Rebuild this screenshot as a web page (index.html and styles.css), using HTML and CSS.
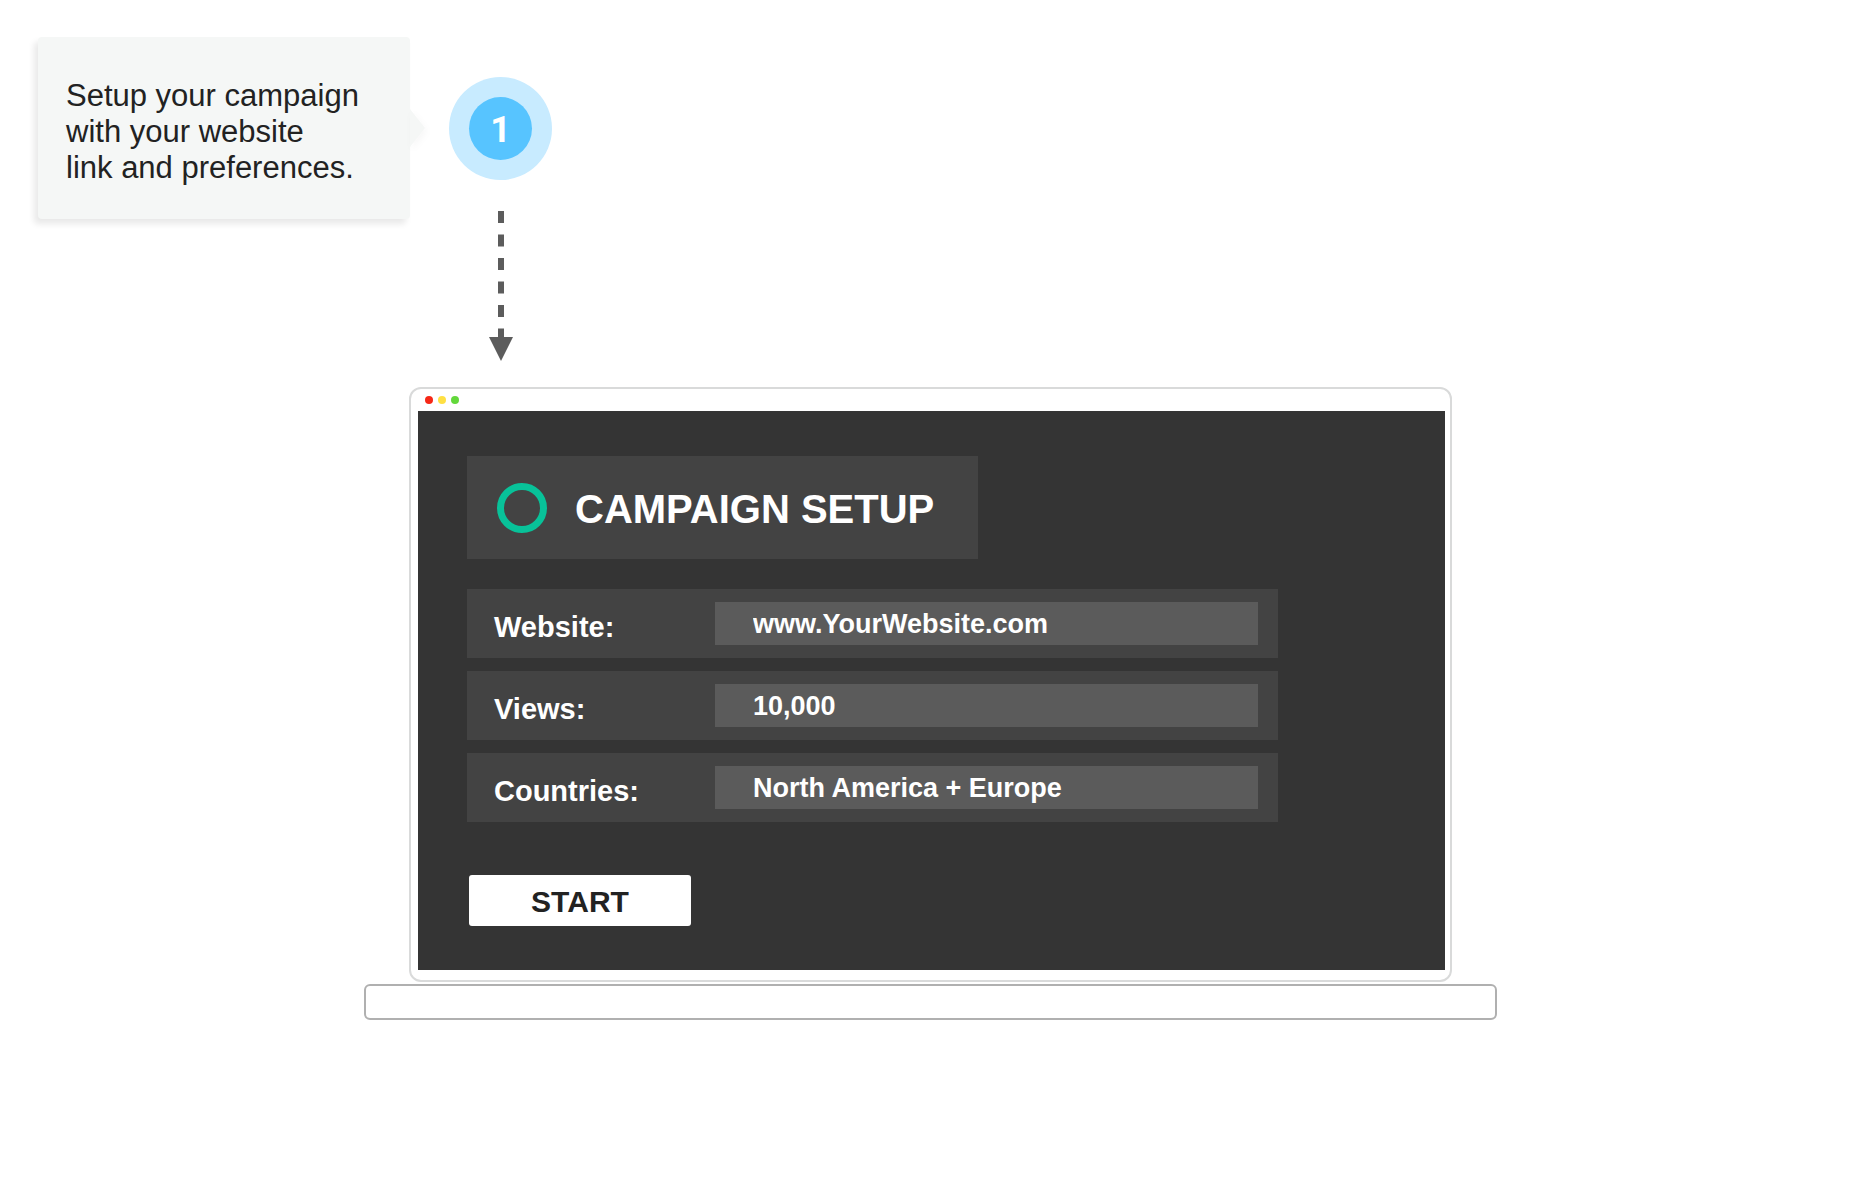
FILE: index.html
```
<!DOCTYPE html>
<html lang="en">
<head>
    <title>Campaign Setup</title>
    <meta charset="UTF-8">
    <meta name="viewport" content="width=device-width, initial-scale=1.0">
    <link rel="stylesheet" href="styles.css">
</head>
<body>
    <main class="page">
        <section class="step">
            <p class="callout">Setup your campaign<br>with your website<br>link and preferences.</p>
            <div class="marker">
                <div class="badge"><span class="number">1</span></div>
                <svg class="arrow" width="24" height="150" viewBox="0 0 24 150" aria-hidden="true">
                    <path d="M12 0V128" stroke="#5c5c5c" stroke-width="6" stroke-dasharray="12 11.5"/>
                    <path d="M0 126H24L12 150Z" fill="#5c5c5c"/>
                </svg>
            </div>
        </section>

        <section class="laptop">
            <div class="frame">
                <div class="titlebar">
                    <span class="dot red"></span>
                    <span class="dot yellow"></span>
                    <span class="dot green"></span>
                </div>
                <form class="screen">
                    <div class="heading">
                        <span class="ring"></span>
                        <h1>CAMPAIGN SETUP</h1>
                    </div>
                    <div class="fields">
                        <div class="field">
                            <label for="website">Website:</label>
                            <input type="text" id="website" value="www.YourWebsite.com">
                        </div>
                        <div class="field">
                            <label for="views">Views:</label>
                            <input type="text" id="views" value="10,000">
                        </div>
                        <div class="field">
                            <label for="countries">Countries:</label>
                            <input type="text" id="countries" value="North America + Europe">
                        </div>
                    </div>
                    <button type="button" class="start">START</button>
                </form>
            </div>
            <div class="base"></div>
        </section>
    </main>
</body>
</html>
```

FILE: styles.css
```
* { box-sizing: border-box; }
body {
    margin: 0;
    background: #fff;
    color: #222;
    font-family: "Liberation Sans", Arial, Helvetica, sans-serif;
}
.page { padding: 37px 42px 40px 38px; }

/* Step callout */
.step {
    display: flex;
    align-items: flex-start;
    gap: 39px;
}
.callout {
    position: relative;
    width: 372px;
    margin: 0;
    padding: 41px 28px 33px;
    background: #f5f7f6;
    border-radius: 4px;
    box-shadow: -4px 5px 6px rgba(0, 0, 0, 0.09);
    font-size: 31px;
    line-height: 36px;
}
.callout::after {
    content: "";
    position: absolute;
    top: 72px;
    left: 100%;
    border: 19px solid transparent;
    border-left: 15px solid #f5f7f6;
    border-right: 0;
    filter: drop-shadow(2px 3px 3px rgba(0, 0, 0, 0.03));
}
.marker {
    display: flex;
    flex-direction: column;
    align-items: center;
    gap: 31px;
    padding-top: 40px;
}
.badge {
    width: 103px;
    height: 103px;
    padding: 20px;
    border-radius: 50%;
    background: #c8ebff;
}
.number {
    display: block;
    height: 63px;
    padding-top: 2px;
    border-radius: 50%;
    background: #57c4ff;
    color: #fff;
    font-family: Roboto, sans-serif;
    font-size: 36px;
    font-weight: bold;
    line-height: 63px;
    text-align: center;
}
.arrow { display: block; }

/* Laptop */
.laptop {
    max-width: 1133px;
    margin: 26px auto 0;
}
.frame {
    margin: 0 45px;
    padding: 0 5px 10px 7px;
    border: 2px solid #d9dada;
    border-radius: 12px;
}
.titlebar {
    display: flex;
    align-items: center;
    gap: 5px;
    height: 22px;
    padding-left: 7px;
}
.dot {
    width: 8px;
    height: 8px;
    border-radius: 50%;
}
.red { background: #f62817; }
.yellow { background: #ffe043; }
.green { background: #63d83b; }
.screen {
    padding: 45px 49px 44px;
    background: #343434;
    color: #fff;
}
.heading {
    display: flex;
    align-items: center;
    gap: 28px;
    max-width: 511px;
    min-height: 103px;
    padding: 0 30px;
    background: #434343;
}
.ring {
    flex: none;
    width: 50px;
    height: 50px;
    border: 7px solid #08c299;
    border-radius: 50%;
}
h1 {
    margin: 0;
    padding-top: 2px;
    font-size: 40px;
    line-height: 44px;
    white-space: nowrap;
}
.fields {
    display: flex;
    flex-direction: column;
    gap: 13px;
    max-width: 811px;
    margin-top: 30px;
}
.field {
    display: grid;
    grid-template-columns: 221px 1fr;
    align-items: center;
    padding: 13px 20px 13px 27px;
    background: #434343;
}
label {
    padding-top: 6px;
    font-size: 29px;
    font-weight: bold;
    line-height: 32px;
}
input {
    width: 100%;
    min-width: 0;
    height: 43px;
    padding: 2px 38px 0;
    border: 0;
    border-radius: 0;
    background: #5b5b5b;
    color: #fff;
    font-family: inherit;
    font-size: 27px;
    font-weight: bold;
}
.start {
    display: block;
    width: 222px;
    height: 51px;
    margin: 53px 2px 0;
    padding: 2px 0 0;
    border: 0;
    border-radius: 3px;
    background: #fff;
    color: #222;
    font-family: inherit;
    font-size: 30px;
    font-weight: bold;
    cursor: pointer;
}
.base {
    height: 36px;
    margin-top: 2px;
    border: 2px solid #b0b0b0;
    border-radius: 6px;
}
```
